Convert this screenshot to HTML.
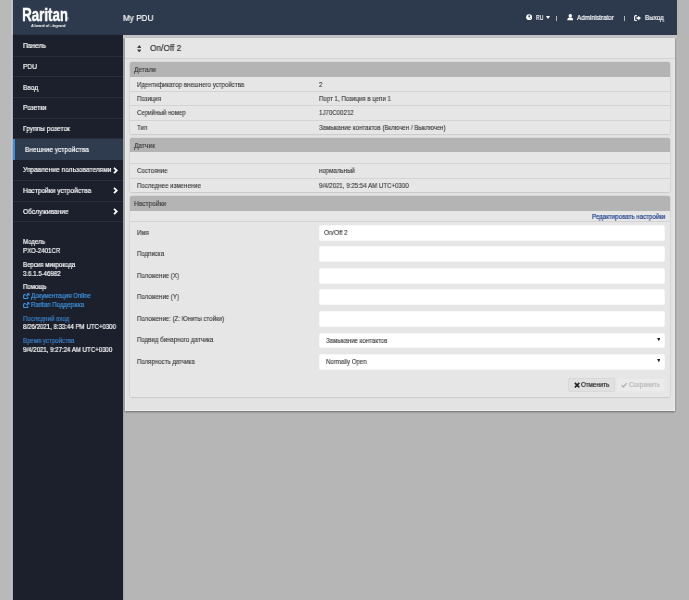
<!DOCTYPE html>
<html lang="ru">
<head>
<meta charset="utf-8">
<title>My PDU</title>
<style>
*{box-sizing:border-box;margin:0;padding:0}
html,body{width:689px;height:600px;overflow:hidden}
body{background:#b6b6b6;font-family:"Liberation Sans",sans-serif;color:#333;position:relative}
.abs{position:absolute}
.t{position:absolute;white-space:nowrap;line-height:1;display:inline-block}
#hdr{position:absolute;left:12.8px;top:0;width:664px;height:35.2px;background:#2d3a4d}
#side{position:absolute;left:12.8px;top:35px;width:110.1px;height:565px;background:#1b202c;box-shadow:.4px 0 1.2px rgba(0,0,0,.45)}
#logo{position:absolute;left:21.7px;top:4.8px;font-weight:bold;font-size:18.3px;color:#fff;line-height:20px;transform-origin:0 0;transform:scale(.7315,1);white-space:nowrap;-webkit-text-stroke:.45px #fff;will-change:transform}
#brand{position:absolute;left:31px;top:22.9px;font-size:4.4px;font-weight:bold;color:#fff;line-height:5px;white-space:nowrap;transform-origin:0 0;transform:scaleX(.835);will-change:transform}
#mypdu{left:122.6px;top:13.6px;font-size:8.8px;color:#fff}
.hd{font-size:6.78px;color:#fff;top:14.8px}
.mi{position:absolute;left:12.8px;width:110.1px;height:20.7px;border-bottom:1px solid #282e3b;color:#fff;font-size:7.13px;line-height:20.4px;padding-left:10px;white-space:nowrap}
.mi.act{background:#2f3c4f;border-left:2px solid #3b8de0;padding-left:10px;border-bottom:none}
.mi svg{position:absolute;right:4.6px;top:6.6px}
.si{position:absolute;left:22.9px;font-size:6.59px;line-height:8px;color:#fff;white-space:nowrap}
.si.b{color:#4196e3}
#main{position:absolute;left:124.8px;top:37.5px;width:550.4px;height:373.3px;background:#e3e3e3;box-shadow:inset 0 0 0 .7px #efefef,0 1px 2px rgba(0,0,0,.42)}
#tbar{position:absolute;left:0;top:0;width:550.4px;height:21.3px;background:#e6e6e6;border-bottom:1px solid #d2d2d2}
.pn{position:absolute;left:129.7px;width:540.3px;background:#e6e6e6;box-shadow:0 0 0 .6px #cfcfcf,0 1px 1px rgba(0,0,0,.12);border-radius:1.6px;overflow:hidden}
.ph{position:absolute;left:0;top:0;width:540px;background:#b4b4b4;font-size:7.1px;line-height:14.6px;padding-left:4.4px;color:#333;height:14.6px}
.rw{position:absolute;left:0;width:541px;border-top:1px solid #d4d4d4;font-size:6.61px;color:#333}
.rw span{position:absolute;top:2.8px;line-height:8px;white-space:nowrap}
.rw .l{left:7.4px}
.rw .v{left:189.1px}
.fl{position:absolute;left:137px;font-size:6.59px;line-height:8px;color:#333;white-space:nowrap}
.in{position:absolute;left:318.9px;width:345.9px;height:15.9px;background:#fff;border:1px solid #f8f8f8;border-radius:2px;font-size:6.59px;line-height:14.2px;padding-left:4.3px;color:#333;white-space:nowrap}
.in svg{position:absolute;right:3.5px;top:4.5px}
.btn{position:absolute;top:378.2px;height:13.7px;border:1px solid #d9d9d9;border-radius:2px;font-size:6.7px;line-height:12px;white-space:nowrap;background:#e1e1e1;color:#222}

.x,.m{display:inline-block;transform:scaleX(var(--sx));transform-origin:0 50%;white-space:nowrap}
.t,.si,.fl,.rw span{transform:scaleX(var(--sx));transform-origin:0 50%}
.si.b.lk{transform:none}
:root{--sx:.926}
.ph .x{position:relative;top:.9px}
.m{position:relative;top:.3px}
.t,.si,.fl,.rw span,.x,.m{-webkit-text-stroke:.18px currentColor;will-change:transform}
.fl,.rw span,.pn .x,.in .x{-webkit-text-stroke-width:.1px}
</style>
</head>
<body>
<div class="abs" style="left:0;top:0;width:12.8px;height:600px;background:linear-gradient(90deg,#b9b9ba 0,#b9b9ba 10.6px,#c6c6c9 11.8px,#c2c2c6 12.8px)"></div>
<div id="hdr"></div>
<div id="side"></div>

<div id="logo">Raritan</div><div class="abs" style="left:66.6px;top:18.4px;font-size:3.2px;line-height:3.2px;color:#fff;opacity:.85">®</div>
<div id="brand">A brand of <span style="font-style:normal">&#9633;</span>legrand</div>
<div id="mypdu" class="t">My PDU</div>

<svg class="abs" style="left:525.7px;top:14px" width="6.4" height="6.4" viewBox="0 0 12 12"><circle cx="6" cy="6" r="5.7" fill="#fff"/><path d="M5.2 2.4 L7.8 2.8 L8.4 4.6 L6.8 5.2 L6.4 6.6 L5 6 L4.2 4 Z M7.4 7.6 L8.8 7.8 L8.2 9.4 L7.2 9 Z" fill="#2d3a4d"/></svg>
<div class="t hd" style="left:536.2px;font-size:6.6px;top:14.9px;--sx:.79">RU</div>
<svg class="abs" style="left:546.1px;top:16.3px" width="4" height="3.1" viewBox="0 0 40 31"><path d="M0 0 H40 L20 31 Z" fill="#fff"/></svg>
<div class="t hd" style="left:555.9px;top:15.6px;font-size:5.2px;color:#eceef1;--sx:1">|</div>
<svg class="abs" style="left:566.7px;top:14.3px" width="6.6" height="6.3" viewBox="0 0 12 12"><circle cx="6" cy="3.5" r="3.3" fill="#fff"/><path d="M0.2 12 C0.2 8.6 2 7 4 6.6 L8 6.6 C10 7 11.8 8.6 11.8 12 Z" fill="#fff"/></svg>
<div class="t hd" style="left:577px">Administrator</div>
<div class="t hd" style="left:623.7px;top:15.6px;font-size:5.2px;color:#eceef1;--sx:1">|</div>
<svg class="abs" style="left:634px;top:14.5px" width="7.2" height="6.2" viewBox="0 0 14 12"><path d="M5.4 1.2 H3.2 C1.8 1.2 1.2 2 1.2 3.2 V8.8 C1.2 10 1.8 10.8 3.2 10.8 H5.4" fill="none" stroke="#fff" stroke-width="2.2"/><path d="M4.8 4.2 H8.2 V1.2 L13.6 6 L8.2 10.8 V7.8 H4.8 Z" fill="#fff"/></svg>
<div class="t hd" style="left:645px">Выход</div>

<div class="mi" style="top:36.0px"><span class="m">Панель</span></div>
<div class="mi" style="top:56.7px"><span class="m">PDU</span></div>
<div class="mi" style="top:77.4px"><span class="m">Ввод</span></div>
<div class="mi" style="top:98.1px"><span class="m">Розетки</span></div>
<div class="mi" style="top:118.8px"><span class="m">Группы розеток</span></div>
<div class="mi act" style="top:138.7px;height:21px;line-height:22px"><span class="m">Внешние устройства</span></div>
<div class="mi" style="top:160.2px"><span class="m">Управление пользователями</span><svg width="5" height="7" viewBox="0 0 5 7"><path d="M1 .8 L3.8 3.5 L1 6.2" fill="none" stroke="#fff" stroke-width="1.8"/></svg></div>
<div class="mi" style="top:180.9px"><span class="m">Настройки устройства</span><svg width="5" height="7" viewBox="0 0 5 7"><path d="M1 .8 L3.8 3.5 L1 6.2" fill="none" stroke="#fff" stroke-width="1.8"/></svg></div>
<div class="mi" style="top:201.6px"><span class="m">Обслуживание</span><svg width="5" height="7" viewBox="0 0 5 7"><path d="M1 .8 L3.8 3.5 L1 6.2" fill="none" stroke="#fff" stroke-width="1.8"/></svg></div>

<div class="si" style="top:238px">Модель</div>
<div class="si" style="top:246.6px">PXO-2401CR</div>
<div class="si" style="top:260.6px">Версия микрокода</div>
<div class="si" style="top:269.5px">3.6.1.5-46982</div>
<div class="si" style="top:282.8px">Помощь</div>
<div class="si b lk" style="top:292px"><svg width="6.6" height="6.1" viewBox="0 0 13 12" style="vertical-align:-0.7px;margin-right:1.2px"><path d="M9.6 7.6 V9.4 Q9.6 11 8 11 H3 Q1.2 11 1.2 9.4 V4.8 Q1.2 3.2 3 3.2 H5.4" fill="none" stroke="#4196e3" stroke-width="2.1"/><path d="M7 .4 H12.7 V6.1 L10.7 4.1 L7.5 7.3 L5.8 5.6 L9 2.4 Z" fill="#4196e3"/></svg><span class="x">Документация Online</span></div>
<div class="si b lk" style="top:300.8px"><svg width="6.6" height="6.1" viewBox="0 0 13 12" style="vertical-align:-0.7px;margin-right:1.2px"><path d="M9.6 7.6 V9.4 Q9.6 11 8 11 H3 Q1.2 11 1.2 9.4 V4.8 Q1.2 3.2 3 3.2 H5.4" fill="none" stroke="#4196e3" stroke-width="2.1"/><path d="M7 .4 H12.7 V6.1 L10.7 4.1 L7.5 7.3 L5.8 5.6 L9 2.4 Z" fill="#4196e3"/></svg><span class="x">Raritan Поддержка</span></div>
<div class="si b" style="top:314.5px;color:#3c82c8">Последний вход</div>
<div class="si" style="top:323.4px">8/26/2021, 8:33:44 PM UTC+0300</div>
<div class="si b" style="top:337.4px;color:#3c82c8">Время устройства</div>
<div class="si" style="top:346px">9/4/2021, 9:27:24 AM UTC+0300</div>

<div class="abs" style="left:123px;top:35px;width:553.8px;height:3px;background:#c3c3c3"></div>
<div id="main"><div id="tbar"></div></div>
<svg class="abs" style="left:136.6px;top:44.6px" width="4.6" height="7.6" viewBox="0 0 46 76"><path d="M23 0 L46 30 H0 Z M23 76 L46 46 H0 Z" fill="#444"/></svg>
<div class="t" style="left:149.6px;top:43.9px;font-size:8.96px;color:#333">On/Off 2</div>

<div class="pn" style="top:62.2px;height:72px">
  <div class="ph"><span class="x">Детали</span></div>
  <div class="rw" style="top:14.6px;height:14.4px;border-top-color:transparent"><span class="l">Идентификатор внешнего устройства</span><span class="v">2</span></div>
  <div class="rw" style="top:28.95px;height:14.4px"><span class="l">Позиция</span><span class="v">Порт 1, Позиция в цепи 1</span></div>
  <div class="rw" style="top:43.3px;height:14.4px"><span class="l">Серийный номер</span><span class="v">1J70C00212</span></div>
  <div class="rw" style="top:57.65px;height:14.4px"><span class="l">Тип</span><span class="v">Замыкание контактов (Включен / Выключен)</span></div>
</div>

<div class="pn" style="top:137.8px;height:54.7px">
  <div class="ph"><span class="x">Датчик</span></div>
  <div class="rw" style="top:25.4px;height:14.6px"><span class="l">Состояние</span><span class="v">нормальный</span></div>
  <div class="rw" style="top:40px;height:14.7px"><span class="l">Последнее изменение</span><span class="v">9/4/2021, 9:25:54 AM UTC+0300</span></div>
</div>

<div class="pn" style="top:196.3px;height:200.6px">
  <div class="ph"><span class="x">Настройки</span></div>
  <div class="rw" style="top:25.2px;height:1px"></div>
</div>
<div class="t" style="left:591.5px;top:214.4px;font-size:6.66px;color:#1a3d8c">Редактировать настройки</div>

<div class="fl" style="top:229px">Имя</div>
<div class="fl" style="top:250.4px">Подписка</div>
<div class="fl" style="top:271.8px">Положение (X)</div>
<div class="fl" style="top:293.2px">Положение (Y)</div>
<div class="fl" style="top:314.6px">Положение: (Z: Юниты стойки)</div>
<div class="fl" style="top:336px">Подвид бинарного датчика</div>
<div class="fl" style="top:358px">Полярность датчика</div>

<div class="in" style="top:224.9px;font-size:6.82px"><span class="x">On/Off 2</span></div>
<div class="in" style="top:246.4px"></div>
<div class="in" style="top:267.9px"></div>
<div class="in" style="top:289.3px"></div>
<div class="in" style="top:310.7px"></div>
<div class="in" style="top:332.5px;padding-left:6.4px"><span class="x">Замыкание контактов</span><svg width="3.6" height="3.2" viewBox="0 0 36 32"><path d="M0 0 H36 L18 32 Z" fill="#222"/></svg></div>
<div class="in" style="top:353.8px;padding-left:6.4px"><span class="x">Normally Open</span><svg width="3.6" height="3.2" viewBox="0 0 36 32"><path d="M0 0 H36 L18 32 Z" fill="#222"/></svg></div>

<div class="btn" style="left:567.6px;width:47px;padding-left:12.4px"><svg class="abs" style="left:5.2px;top:2.9px" width="6.2" height="6.2" viewBox="0 0 10 10"><path d="M1.4 1.4 L8.6 8.6 M8.6 1.4 L1.4 8.6" stroke="#222" stroke-width="2.6" fill="none"/></svg><span class="x">Отменить</span></div>
<div class="btn" style="left:616px;width:48.5px;padding-left:11.5px;color:#b6b6b6;border-color:#e7e7e7;background:#ebebeb"><svg class="abs" style="left:4.4px;top:3px" width="6.4" height="6" viewBox="0 0 11 10"><path d="M1 5.4 L4 8.4 L10 1.8" stroke="#b4b4b4" stroke-width="2.4" fill="none"/></svg><span class="x">Сохранить</span></div>
</body>
</html>
